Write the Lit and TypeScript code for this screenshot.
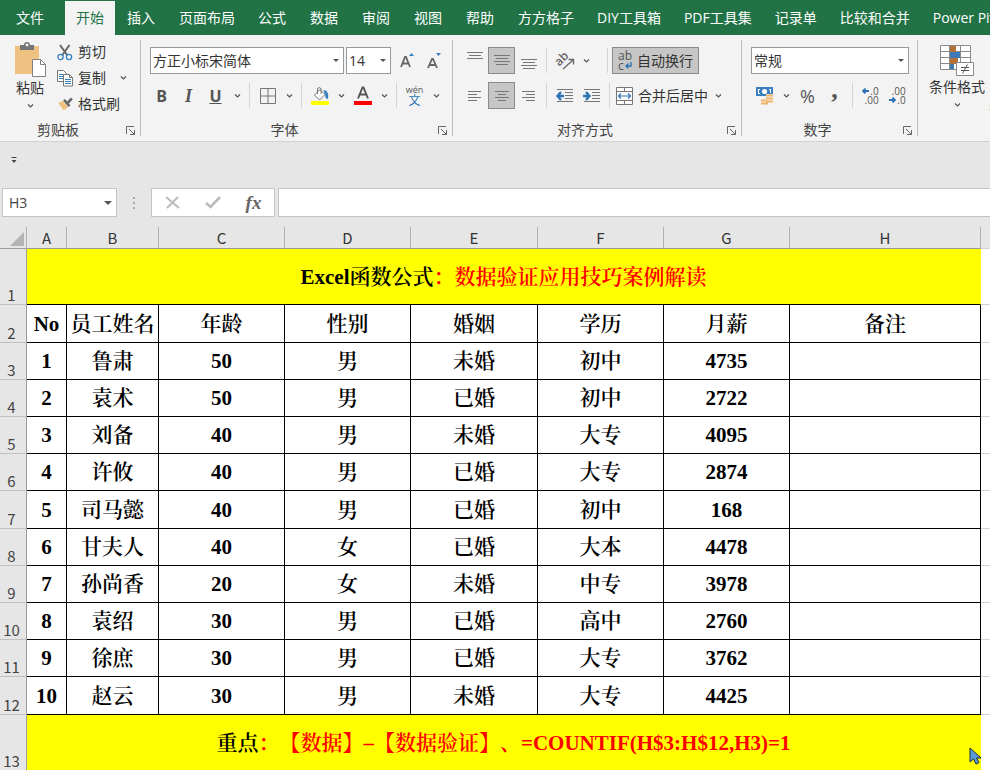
import { LitElement, html, svg, css, TemplateResult } from "lit";
import { customElement, property } from "lit/decorators.js";
import { classMap } from "lit/directives/class-map.js";

const lines = (rows: [number, number, number][]) =>
  rows.map(([x, y, w]) => svg`<path d="M${x} ${y}.5h${w}" stroke="#777" />`);

const frame = (w: number, h: number, body: unknown) =>
  html`<svg width=${w} height=${h} viewBox="0 0 ${w} ${h}" fill="none" aria-hidden="true">${body}</svg>`;

const icons: Record<string, TemplateResult> = {
  chevron: frame(7, 6, svg`<path d="M1 1.5 3.5 4 6 1.5" stroke="#555" stroke-width="1.2"/>`),
  paste: frame(32, 36, svg`
    <path d="M1 4h24v28H1z" fill="#efc282"/>
    <path d="M6 3h4a3 3 0 0 1 6 0h4v5H6z" fill="#757575"/><circle cx="13" cy="3" r="1.4" fill="#f3f3f3"/>
    <path d="M18.500 17.500h8l5 5v12h-13z" fill="#fff" stroke="#808080"/><path d="M26.500 17.500v5h5" stroke="#808080"/>`),
  cut: frame(16, 17, svg`
    <path d="M3 1l7.500 10.500M12.500 1 5 11.500" stroke="#666" stroke-width="2"/>
    <circle cx="3.500" cy="13" r="2.600" stroke="#3a7fc0" stroke-width="1.300"/><circle cx="12" cy="13" r="2.600" stroke="#3a7fc0" stroke-width="1.300"/>`),
  copy: frame(16, 17, svg`
    <path d="M.5.5h6l3 3v8h-9z" fill="#fff" stroke="#777"/><path d="M2 4.500h4M2 6.500h4M2 8.500h4" stroke="#3a7fc0"/>
    <path d="M6.500 4.500h6l3 3v8.500h-9z" fill="#fff" stroke="#777"/><path d="M12.500 4.500v3h3" stroke="#777"/><path d="M8 9.500h6M8 11.500h6M8 13.500h6" stroke="#3a7fc0"/>`),
  brush: frame(16, 16, svg`
    <path d="M1 7l5-2 5 6-4 3.500z" fill="#efc282"/>
    <path d="M6 4.500 8 3l5.500 6.500-2 1.500z" fill="#666"/><path d="M10 5.500 14 1.500l1.800 1.800-4 4.500z" fill="#666"/>`),
  launcher: frame(9, 9, svg`<path d="M.5 8V.5H8M3 3l5 5M8.500 4v4.500H4" stroke="#666"/>`),
  grow: frame(14, 18, svg`<path d="M9 4 11.500 1 14 4z" fill="#3a7fc0"/><path d="M1 15 5 5h1l4 10M2.500 11.500h6" stroke="#666" stroke-width="1.800"/>`),
  shrink: frame(14, 18, svg`<path d="M9 1h5l-2.500 3z" fill="#3a7fc0"/><path d="M1 16 5 7h1l4 9M2.500 13h6" stroke="#666" stroke-width="1.800"/>`),
  borders: frame(16, 16, svg`<path d="M.5.5h15v15H.5zM8 .5v15M.5 8h15" stroke="#777"/>`),
  fill: frame(18, 20, svg`
    <path d="M3.500 9 9 3.500l5 5-5.500 5.500z" fill="#fff" stroke="#777"/><path d="M6.500 8V3a1.800 1.800 0 0 1 3.500 0v5" stroke="#777"/>
    <path d="M12.500 4c4 0 5.500 4 4.500 9-2 0-3-2-3-4.500z" fill="#3a7fc0"/><path d="M0 15h18v4H0z" fill="#ff0"/>`),
  color: frame(18, 20, svg`<path d="M4 12.500 8.500 1.500h1l4.500 11M6 8.500h6.500" stroke="#555" stroke-width="1.900"/><path d="M0 15h18v4H0z" fill="#f00"/>`),
  top: frame(16, 20, lines([[0, 1, 16], [2, 4, 12], [0, 7, 16]])),
  middle: frame(16, 20, lines([[0, 4, 16], [2, 7, 12], [0, 10, 16], [2, 13, 12]])),
  bottom: frame(16, 20, lines([[0, 8, 16], [2, 11, 12], [0, 14, 16], [2, 17, 12]])),
  left: frame(14, 14, lines([[0, 2, 13], [0, 5, 9], [0, 8, 13], [0, 11, 9]])),
  center: frame(14, 14, lines([[0, 2, 14], [3, 5, 8], [0, 8, 14], [3, 11, 8]])),
  right: frame(14, 14, lines([[0, 2, 13], [4, 5, 9], [0, 8, 13], [4, 11, 9]])),
  outdent: frame(18, 16, svg`${lines([[1, 1, 16], [9, 4, 8], [9, 7, 8], [9, 10, 8], [1, 13, 16]])}<path d="M8 8H2M5 4 1.500 8 5 12" stroke="#2e74b5" stroke-width="2.400"/>`),
  indent: frame(18, 16, svg`${lines([[1, 1, 16], [9, 4, 8], [9, 7, 8], [9, 10, 8], [1, 13, 16]])}<path d="M0 8h6M3 4 6.500 8 3 12" stroke="#2e74b5" stroke-width="2.400"/>`),
  merge: frame(17, 18, svg`<path d="M.5.5h16v17H.5zM.5 4.500h16M.5 13.500h16M8.500 .5v4M8.500 13.500v4" fill="#fff" stroke="#777"/><path d="M2.500 9h12M5 6.500 2.500 9 5 11.500M12 6.500 14.500 9 12 11.500" stroke="#2e74b5" stroke-width="1.200"/>`),
  orient: frame(18, 18, svg`<text x="0" y="11" font-family="Open Sans" font-size="12" font-weight="600" fill="#666" transform="rotate(-45 6 9)">ab</text><path d="M7 17 17 8M12.500 7.500h5v5" stroke="#666" stroke-width="1.300"/>`),
  enter: frame(7, 7, svg`<path d="M6 0v4H1M3.500 1.500 1 4l2.500 2.500" stroke="#2e74b5" stroke-width="1.400"/>`),
  arrowLeft: frame(7, 6, svg`<path d="M7 3H1M3.500.5 1 3l2.500 2.500" stroke="#2e74b5" stroke-width="1.800"/>`),
  arrowRight: frame(7, 6, svg`<path d="M0 3h6M3.500.5 6 3 3.500 5.500" stroke="#2e74b5" stroke-width="1.800"/>`),
  money: frame(18, 18, svg`
    <path d="M0 0h17v9H0z" fill="#3a7fc0"/><path d="M2 2h2v1H3v3h1v1H2zM15 2h-2v1h1v3h1z" fill="#fff"/><circle cx="8.500" cy="4.500" r="2.600" fill="#fff"/>
    <path d="M10 7h7v10h-7zM5 12h6v5H5z" fill="#f3f3f3"/><path d="M10 8.500h7M10 11.500h7M10 14.500h7M5 13.500h5M5 16.500h7" stroke="#efb366" stroke-width="2"/>`),
  cond: frame(34, 32, svg`
    <path d="M.5.5h30v24H.5z" fill="#fff"/>
    <path d="M.5.5h30v24H.5zM.5 6.500h30M.5 12.500h30M.5 18.500h30M9.500.5v24M20.500.5v24" stroke="#8a8a8a"/>
    <path d="M10 1h6v6h-6zM10 13h8v6h-8z" fill="#b5713a"/><path d="M10 7h10v6H10zM10 19h4v5h-4z" fill="#3f7ab8"/>
    <path d="M16.500 17.500h17v13h-17z" fill="#fff" stroke="#8a8a8a"/><path d="M21 22.500h8M21 25.500h8M27.500 19.500l-5 9" stroke="#555"/>`),
  cancel: frame(15, 13, svg`<path d="M1 1l13 11M13 1 2 12" stroke="#bbb" stroke-width="2"/>`),
  accept: frame(16, 13, svg`<path d="M1 7l4.500 4L15 1" stroke="#bbb" stroke-width="2.600"/>`),
  customise: frame(6, 6, svg`<path d="M.5.5h5" stroke="#444"/><path d="M.5 3h5L3 6z" fill="#444"/>`),
  pointer: frame(13, 18, svg`<path d="M1 1v14l3.500-3 2.500 5 3-1.500-2.500-4.500H12z" fill="#5b9bd5" stroke="#1c2a3a"/>`),
};

@customElement("tool-button")
class ToolButton extends LitElement {
  @property() label = "";
  @property() icon = "";
  @property({ type: Boolean }) active = false;
  static styles = css`
    :host { display: flex; }
    button { display: flex; align-items: center; justify-content: center; width: 27px; height: 27px; padding: 0; border: 1px solid transparent; background: none; color: #555; font: 14px/20px "Open Sans", "Noto Sans CJK SC", sans-serif; }
    :host([narrow]) button { width: 16px; }
    button.active { background: #c6c6c6; border-color: #8a8a8a; }
    svg { display: block; flex: none; overflow: visible; }
  `;
  render() {
    return html`<button type="button" class=${classMap({ active: this.active })} aria-label=${this.label} aria-pressed=${this.active}>
      ${this.icon ? icons[this.icon] : html`<slot></slot>`}
    </button>`;
  }
}

@customElement("ribbon-group")
class RibbonGroup extends LitElement {
  @property() label = "";
  static styles = css`
    :host { display: flex; flex: none; flex-direction: column; box-sizing: border-box; height: 96px; margin: 5px 0; border-right: 1px solid #bdbdbd; }
    .body { flex: 1; min-height: 0; }
    .foot { display: grid; grid-template-columns: 1fr 24px; height: 20px; margin-bottom: -4px; align-items: center; }
    .name { text-align: center; font: 14px/20px "Open Sans", "Noto Sans CJK SC", sans-serif; color: #444; }
    button { display: grid; padding: 0 5px; border: 0; background: none; justify-self: end; }
  `;
  render() {
    return html`<div class="body"><slot></slot></div>
      <div class="foot"><span class="name">${this.label}</span><button type="button" aria-label="${this.label}设置">${icons.launcher}</button></div>`;
  }
}

const tabs = ["文件", "开始", "插入", "页面布局", "公式", "数据", "审阅", "视图", "帮助", "方方格子", "DIY工具箱", "PDF工具集", "记录单", "比较和合并", "Power Pivot"];
const columns = ["A", "B", "C", "D", "E", "F", "G", "H"];
const records: string[][] = [
  ["No", "员工姓名", "年龄", "性别", "婚姻", "学历", "月薪", "备注"],
  ["1", "鲁肃", "50", "男", "未婚", "初中", "4735", ""],
  ["2", "袁术", "50", "男", "已婚", "初中", "2722", ""],
  ["3", "刘备", "40", "男", "未婚", "大专", "4095", ""],
  ["4", "许攸", "40", "男", "已婚", "大专", "2874", ""],
  ["5", "司马懿", "40", "男", "已婚", "初中", "168", ""],
  ["6", "甘夫人", "40", "女", "已婚", "大本", "4478", ""],
  ["7", "孙尚香", "20", "女", "未婚", "中专", "3978", ""],
  ["8", "袁绍", "30", "男", "已婚", "高中", "2760", ""],
  ["9", "徐庶", "30", "男", "已婚", "大专", "3762", ""],
  ["10", "赵云", "30", "男", "未婚", "大专", "4425", ""],
];

@customElement("app-root")
class AppRoot extends LitElement {
  static styles = css`
    :host { display: block; overflow: hidden; background: #e6e6e6; color: #333; font: 14px/20px "Open Sans", "Noto Sans CJK SC", sans-serif; }
    svg { display: block; flex: none; }
    button, input, select { font: inherit; color: inherit; }
    button { padding: 0; border: 0; background: none; }
    .tabs { display: flex; height: 35px; background: #217346; overflow: hidden; white-space: nowrap; }
    .tabs button { flex: none; height: 34px; padding: 0 12px; margin-top: 1px; color: #fff; }
    .tabs button.long { padding-right: 11px; }
    .tabs button.file { padding: 0 21px 0 16px; }
    .tabs button.on { padding: 0 11px; background: #f3f3f3; color: #217346; }
    .ribbon { display: flex; height: 106px; background: #f3f3f3; border-bottom: 1px solid #d2d2d2; overflow: hidden; }
    .row { display: flex; align-items: center; height: 27px; }
    .row + .row { margin-top: 8px; }
    .rows { padding-top: 7px; }
    .clip { display: flex; gap: 11px; width: 140px; box-sizing: border-box; padding-left: 14px; }
    .big { display: flex; flex-direction: column; align-items: center; white-space: nowrap; }
    .big svg + .caption + svg { margin-top: 5px; }
    .paste { align-self: flex-start; padding-top: 2px; }
    .small { display: flex; flex-direction: column; gap: 2px; }
    .small button { display: flex; align-items: center; gap: 5px; height: 24px; }
    .line { display: flex; align-items: center; gap: 14px; }
    .font { width: 304px; padding-left: 7px; }
    .align { width: 280px; padding-left: 8px; }
    .num { width: 166px; padding-left: 9px; }
    .sep { flex: none; width: 1px; height: 25px; margin: 0 4px; background: #d4d4d4; }
    .combo { position: relative; display: block; }
    .combo::after { content: ""; position: absolute; right: 5px; top: 12px; border: 3px solid transparent; border-top-color: #555; border-bottom: 0; pointer-events: none; }
    .combo select { appearance: none; display: block; box-sizing: border-box; width: 100%; height: 27px; padding: 0 2px; border: 1px solid #999; border-radius: 0; background: #fff; }
    .family { width: 194px; margin-left: 2px; }
    .size { width: 45px; margin: 0 2px; }
    .format { width: 158px; }
    .bold { font-weight: 700; font-size: 16px; }
    .italic { font-style: italic; font-family: "Liberation Serif", serif; font-weight: 700; font-size: 18px; }
    .under { text-decoration: underline; font-weight: 700; font-size: 16px; }
    .pinyin { display: grid; justify-items: center; font-size: 9px; line-height: 10px; }
    .pinyin .han { color: #2e74b5; font-size: 12px; line-height: 12px; }
    .text { display: flex; align-items: center; gap: 5px; height: 27px; padding: 0 5px; white-space: nowrap; box-sizing: border-box; border: 1px solid transparent; }
    .gap { width: 9px; }
    .merge { padding: 0 1px; }
    .text.on { padding: 0 5px; background: #c6c6c6; border-color: #8a8a8a; }
    .abc { display: grid; font-size: 12px; line-height: 10px; text-align: left; color: #555; }
    .mark { display: flex; align-items: center; justify-content: flex-end; gap: 1px; }
    .abc .mark { justify-content: flex-start; }
    .pct { font-size: 18px; }
    .comma { font: 700 26px/14px "Liberation Serif", serif; height: 26px; }
    .dec { display: grid; font-size: 10px; line-height: 9px; text-align: right; }
    .styles { display: flex; gap: 4px; padding: 10px 0 0 11px; flex: none; }
    .styles .big { align-self: flex-start; }
    .styles .table-style { padding-top: 34px; }
    .table-style .caption { line-height: 18px; }
    .quick { display: flex; align-items: center; height: 36px; padding: 0 11px; }
    .formula { display: flex; height: 29px; margin: 10px 0; padding-left: 2px; }
    .formula input { box-sizing: border-box; height: 29px; border: 1px solid #c4c4c4; background: #fff; padding: 0 6px; border-radius: 0; color: #444; }
    .formula .combo { width: 115px; }
    .formula .combo input { display: block; width: 100%; }
    .formula .combo::after { top: 13px; border-width: 4px 4px 0; }
    .dots { display: grid; align-content: center; justify-content: center; gap: 3px; width: 34px; }
    .dots i { width: 2px; height: 2px; background: #aaa; }
    .acts { display: flex; align-items: center; justify-content: space-around; width: 124px; box-sizing: border-box; margin-right: 3px; border: 1px solid #c4c4c4; background: #fff; }
    .fx { font: italic 700 19px/24px "Liberation Serif", serif; color: #666; }
    .formula .entry { flex: 1; min-width: 0; border-right: 0; }
    .sheet { position: relative; background: #fff; }
    .grid { width: 100%; table-layout: fixed; border-collapse: separate; border-spacing: 0; }
    .grid th, .grid td { padding: 0; }
    .c0 { width: 27px; } .cA { width: 40px; } .cB { width: 92px; } .cC, .cD, .cF, .cG { width: 126px; } .cE { width: 127px; } .cH { width: 191px; }
    .grid .head { height: 21px; background: #e6e6e6; border-bottom: 1px solid #9b9b9b; border-right: 1px solid #b0b0b0; font-weight: 400; font-size: 15px; line-height: 21px; color: #333; font-family: "Noto Sans CJK SC", sans-serif; }
    .grid .head.rest { border-right: 0; }
    .corner { display: flex; justify-content: flex-end; padding: 3px 2px 0 0; }
    .grid .side { vertical-align: bottom; background: #e6e6e6; border-right: 1px solid #9b9b9b; border-bottom: 1px solid #c0c0c0; padding-right: 3px; font: 400 15px/18px "Noto Sans CJK SC", sans-serif; color: #444; }
    .grid .cell { text-align: center; border-right: 1px solid #000; border-bottom: 1px solid #000; font: 600 21px/30px "Liberation Serif", "Noto Serif CJK SC", "Noto Sans CJK SC", serif; text-spacing-trim: space-all; color: #000; white-space: nowrap; }
    .grid .rest { border-bottom: 1px solid #d4d4d4; }
    .grid .band { background: #ff0; border-right-color: #ff0; }
    .tall { height: 56px; } .mid { height: 37px; } .mid:nth-child(5n + 2) { height: 38px; }
    .red { color: #f00; }
    .pointer { position: absolute; right: 8px; bottom: 6px; pointer-events: none; }
  `;

  private more() {
    return html`<tool-button narrow label="更多" icon="chevron"></tool-button>`;
  }

  private tool(label: string, icon: string, active = false) {
    return html`<tool-button label=${label} icon=${icon} ?active=${active}></tool-button>`;
  }

  private band(n: number, content: TemplateResult) {
    return html`<tr class="tall"><th class="side" scope="row">${n}</th><td class="cell band" colspan="8">${content}</td><td class="rest"></td></tr>`;
  }

  render() {
    const sep = html`<span class="sep"></span>`;
    return html`
      <nav class="tabs">${tabs.map((t, i) => html`<button type="button" class=${classMap({ file: i === 0, on: i === 1, long: t.length > 2 })}>${t}</button>`)}</nav>
      <div class="ribbon">
        <ribbon-group label="剪贴板"><div class="clip">
          <button type="button" class="big paste">${icons.paste}<span class="caption">粘贴</span>${icons.chevron}</button>
          <div class="small">
            <button type="button">${icons.cut}剪切</button>
            <div class="line"><button type="button">${icons.copy}复制</button><button type="button" aria-label="复制选项">${icons.chevron}</button></div>
            <button type="button">${icons.brush}格式刷</button>
          </div>
        </div></ribbon-group>
        <ribbon-group label="字体"><div class="rows font">
          <div class="row">
            <span class="combo family"><select aria-label="字体"><option>方正小标宋简体</option></select></span>
            <span class="combo size"><select aria-label="字号"><option>14</option></select></span>
            ${this.tool("增大字号", "grow")}${this.tool("减小字号", "shrink")}
          </div>
          <div class="row">
            <tool-button label="加粗"><span class="bold">B</span></tool-button>
            <tool-button label="倾斜"><span class="italic">I</span></tool-button>
            <tool-button label="下划线"><span class="under">U</span></tool-button>
            ${this.more()}${sep}${this.tool("边框", "borders")}${this.more()}${sep}
            ${this.tool("填充颜色", "fill")}${this.more()}${this.tool("字体颜色", "color")}${this.more()}${sep}
            <tool-button label="拼音"><span class="pinyin"><span>wén</span><span class="han">文</span></span></tool-button>${this.more()}
          </div>
        </div></ribbon-group>
        <ribbon-group label="对齐方式"><div class="rows align">
          <div class="row">
            ${this.tool("顶端对齐", "top")}${this.tool("垂直居中", "middle", true)}${this.tool("底端对齐", "bottom")}${sep}
            ${this.tool("方向", "orient")}${this.more()}
            <span class="gap"></span>${sep}
            <button type="button" class="text on"><span class="abc"><span>ab</span><span class="mark">c${icons.enter}</span></span>自动换行</button>
          </div>
          <div class="row">
            ${this.tool("左对齐", "left")}${this.tool("居中", "center", true)}${this.tool("右对齐", "right")}${sep}
            ${this.tool("减少缩进量", "outdent")}${this.tool("增加缩进量", "indent")}${sep}
            <button type="button" class="text merge">${icons.merge}合并后居中</button>${this.more()}
          </div>
        </div></ribbon-group>
        <ribbon-group label="数字"><div class="rows num">
          <div class="row"><span class="combo format"><select aria-label="数字格式"><option>常规</option></select></span></div>
          <div class="row">
            ${this.tool("会计数字格式", "money")}${this.more()}
            <tool-button label="百分比样式"><span class="pct">%</span></tool-button>
            <tool-button label="千位分隔样式"><span class="comma">,</span></tool-button>${sep}
            <tool-button label="增加小数位数"><span class="dec"><span class="mark">${icons.arrowLeft}.0</span><span>.00</span></span></tool-button>
            <tool-button label="减少小数位数"><span class="dec"><span>.00</span><span class="mark">${icons.arrowRight}.0</span></span></tool-button>
          </div>
        </div></ribbon-group>
        <div class="styles">
          <button type="button" class="big">${icons.cond}<span class="caption">条件格式</span>${icons.chevron}</button>
          <button type="button" class="big table-style"><span class="caption">套用</span><span class="caption">表格格式</span></button>
        </div>
      </div>
      <div class="quick"><button type="button" aria-label="自定义快速访问工具栏">${icons.customise}</button></div>
      <div class="formula">
        <span class="combo"><input aria-label="名称框" value="H3" /></span>
        <span class="dots"><i></i><i></i><i></i></span>
        <div class="acts">
          <button type="button" aria-label="取消">${icons.cancel}</button>
          <button type="button" aria-label="输入">${icons.accept}</button>
          <button type="button" class="fx" aria-label="插入函数">fx</button>
        </div>
        <input class="entry" aria-label="编辑栏" />
      </div>
      <div class="sheet">
        <table class="grid">
          <colgroup><col class="c0" />${columns.map((c) => html`<col class="c${c}" />`)}<col /></colgroup>
          <thead><tr>
            <th class="head"><span class="corner">${frame(14, 14, svg`<path d="M14 0v14H0z" fill="#b4b4b4"/>`)}</span></th>
            ${columns.map((c) => html`<th class="head" scope="col">${c}</th>`)}<th class="head rest"></th>
          </tr></thead>
          <tbody>
            ${this.band(1, html`Excel函数公式<span class="red">：数据验证应用技巧案例解读</span>`)}
            ${records.map((r, i) => html`<tr class="mid"><th class="side" scope="row">${i + 2}</th>${r.map((v) => html`<td class="cell">${v}</td>`)}<td class="rest"></td></tr>`)}
            ${this.band(13, html`重点<span class="red">：【数据】–【数据验证】、=COUNTIF(H$3:H$12,H3)=1</span>`)}
          </tbody>
        </table>
        <span class="pointer">${icons.pointer}</span>
      </div>`;
  }
}
